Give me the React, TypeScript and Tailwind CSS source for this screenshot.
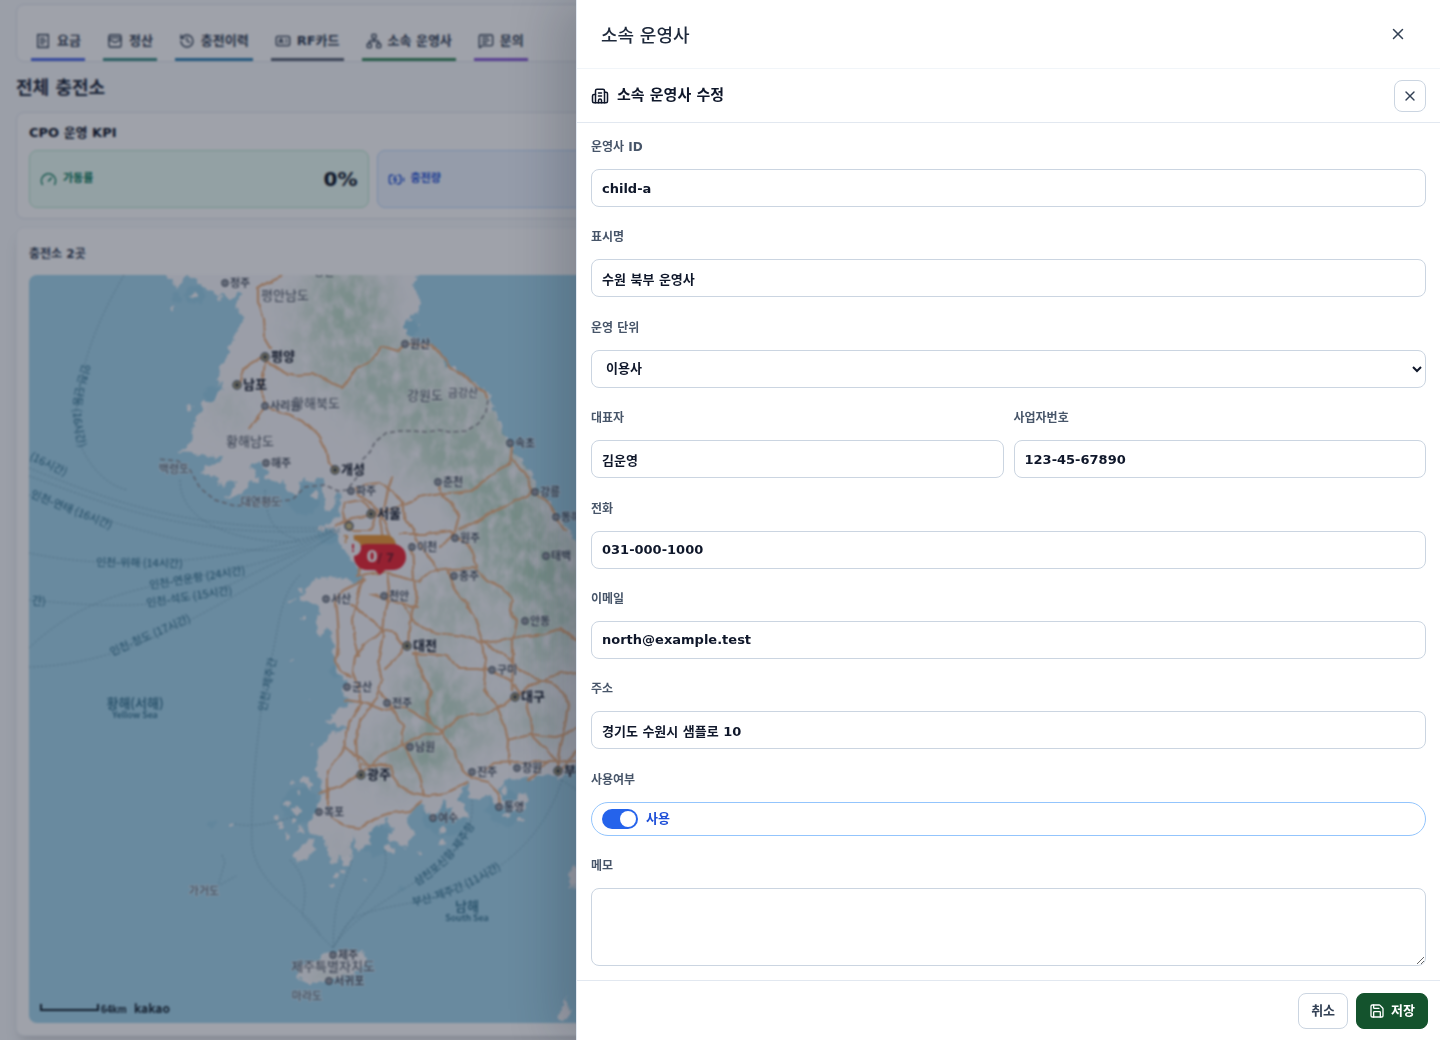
import React from "react";
import {
  BatteryCharging,
  Building2,
  Gauge,
  History,
  IdCard,
  MessageSquareText,
  Network,
  ReceiptText,
  Save,
  WalletCards,
  X,
  type LucideIcon,
} from "lucide-react";

const tabs: { label: string; icon: LucideIcon; line: string }[] = [
  { label: "요금", icon: ReceiptText, line: "border-[#4f6be8]" },
  { label: "정산", icon: WalletCards, line: "border-[#3f8f86]" },
  { label: "충전이력", icon: History, line: "border-[#3585b5]" },
  { label: "RF카드", icon: IdCard, line: "border-[#5b6475]" },
  { label: "소속 운영사", icon: Network, line: "border-[#3a8a5c]" },
  { label: "문의", icon: MessageSquareText, line: "border-[#8b5cd6]" },
];

const roads = [
  "M283 275L270 281L258 289L258 303L263 320L264 336L271 348",
  "M263 356L252 362L244 370L240 384",
  "M265 362L275 366L285 373L297 375L312 374L328 382L343 387L350 378L357 368L372 360L382 346L398 351L405 344L430 346L440 352L450 368L465 376L475 386L486 392L488 398",
  "M265 362L262 384L264 405L256 418L249 428",
  "M265 405L276 411L290 415L305 422L320 436L327 450L329 462L335 470",
  "M354 487L357 494L372 504L384 520L392 540L390 560",
  "M345 503L360 500L375 512L370 530L350 530L343 515L345 503",
  "M337 527L352 518L375 515L395 508L408 503L420 497L440 493L455 493L470 491L485 480L495 472L510 465L512 447",
  "M362 485L378 483L392 489L402 502L402 512L412 528L418 542L432 560L438 572",
  "M392 477L388 488L385 505L380 520L383 540",
  "M440 486L442 494L452 504L459 517L455 532L438 548",
  "M512 460L524 472L531 490L545 500L556 515L566 530",
  "M460 530L475 523L495 510L515 500L527 498L532 490",
  "M400 534L425 534L450 531L463 540L474 553L478 568",
  "M360 567L357 578L365 575L385 572L402 576L418 581L430 572L452 569L475 568L487 580L503 588L512 600L510 612L517 620L513 640L513 665L512 690",
  "M412 545L413 565L415 590L418 597L412 610L410 630L409 648",
  "M388 573L390 590L385 610L383 635L378 662L382 680L376 697L360 722L356 740L357 760L361 775",
  "M365 580L345 590L335 602L337 620L338 645L336 660L340 670L352 678",
  "M350 604L365 615L375 622L383 630L395 633L404 645L400 654L385 668",
  "M363 579L358 600L353 620L355 640L359 655",
  "M403 605L415 623L432 632L462 636L480 643L500 641L525 636L545 634L560 628L577 640",
  "M408 606L418 606L405 605L388 600L371 594",
  "M383 630L365 645L355 657L353 672L360 690L362 705L348 725L343 748L328 770L328 805",
  "M415 650L418 665L425 680L432 690L428 705L426 715L442 732L455 752L463 770L472 778L488 782L498 792L500 805",
  "M412 653L430 654L446 656L460 668L478 668L492 670L510 679L520 692",
  "M448 570L455 590L465 600L475 620L482 640L484 660L486 675L484 690L495 705L503 720L508 740L507 760L508 765",
  "M484 642L498 652L512 660L520 672L537 678L550 682L565 695L568 705L565 725L560 745L557 768",
  "M515 696L540 680L560 674L577 672",
  "M526 702L530 720L532 735L545 748L558 765",
  "M508 740L530 734L555 737L577 730",
  "M485 772L495 763L515 762L535 762L555 762L577 760",
  "M515 697L505 706L483 714L458 716L450 725L440 734L425 734L405 744L385 752L371 765L360 775L340 786L320 792",
  "M345 700L362 702L382 710L405 708L430 722",
  "M380 690L390 705L402 725L402 745L412 760L420 780L423 795",
  "M361 765L375 764L392 767L398 785L405 790L428 795L445 793L468 782",
  "M330 817L345 825L360 827L375 818L390 813L410 811L422 802",
  "M345 748L357 756L370 765L385 765",
  "M558 775L565 765L577 750M548 762L540 770L530 780",
];

const ferryRoutes = [
  "M124 275C95 325 80 365 75 420C76 450 100 485 128 490",
  "M29 468C120 505 190 530 335 528",
  "M29 476C110 505 190 540 335 530",
  "M29 495C90 515 160 540 230 548S300 542 340 528",
  "M29 553C100 568 200 570 335 530",
  "M29 648C90 590 150 588 230 570S300 545 340 530",
  "M29 600C90 605 170 615 240 580S290 560 340 532",
  "M29 667C120 665 190 620 245 590S300 558 340 530",
  "M180 480C180 520 230 543 300 542L340 530",
  "M265 490C265 525 280 535 300 540",
  "M300 575C275 600 280 640 265 680C260 720 250 790 252 845C258 890 310 910 320 935L333 948",
  "M290 860C310 880 305 900 302 915L320 935",
  "M352 860C340 900 335 890 333 948",
  "M385 850C390 885 370 885 333 948",
  "M472 800C475 840 450 860 415 882S350 920 333 948",
  "M562 780C540 850 480 890 410 903S350 920 333 948",
  "M562 780L577 790",
  "M235 824C255 828 275 822 300 815",
  "M222 855L225 862L218 886L236 876",
];

const cities: [number, number, string, boolean?][] = [
  [225, 283, "정주"],
  [265, 357, "평양", true],
  [237, 385, "남포", true],
  [265, 406, "사리원"],
  [405, 344, "원산"],
  [266, 463, "해주"],
  [335, 470, "개성", true],
  [351, 491, "파주"],
  [371, 514, "서울", true],
  [438, 482, "춘천"],
  [510, 443, "속초"],
  [535, 492, "강릉"],
  [556, 517, "동해"],
  [412, 547, "이천"],
  [455, 538, "원주"],
  [454, 576, "충주"],
  [546, 556, "태백"],
  [326, 599, "서산"],
  [384, 596, "천안"],
  [525, 621, "안동"],
  [407, 646, "대전", true],
  [492, 670, "구미"],
  [347, 687, "군산"],
  [387, 703, "전주"],
  [515, 697, "대구", true],
  [410, 747, "남원"],
  [361, 775, "광주", true],
  [472, 772, "진주"],
  [517, 768, "창원"],
  [558, 771, "부산", true],
  [319, 812, "목포"],
  [433, 818, "여수"],
  [499, 807, "통영"],
  [333, 955, "제주"],
  [329, 981, "서귀포"],
];

const regions: [number, number, string, number][] = [
  [285, 300, "평안남도", 13],
  [316, 408, "황해북도", 13],
  [250, 446, "황해남도", 13],
  [425, 400, "강원도", 13],
  [463, 397, "금강산", 11],
  [174, 473, "백령도", 11],
  [261, 506, "대연평도", 11],
  [204, 895, "가거도", 11],
  [333, 971, "제주특별자치도", 13],
  [307, 1000, "마라도", 11],
];

const seaLabels: [string, string][] = [
  ["M83 363C74 395 64 415 90 480", "인천-단둥 (16시간)"],
  ["M29 459L100 493", "(16시간)"],
  ["M30 497L140 541", "인천-연태 (16시간)"],
  ["M96 566L210 568", "인천-위해 (14시간)"],
  ["M150 589L270 570", "인천-연운항 (24시간)"],
  ["M147 607L265 589", "인천-석도 (15시간)"],
  ["M112 656L222 608", "인천-청도 (17시간)"],
  ["M266 712L280 640", "인천-제주간"],
  ["M417 886Q458 862 482 812", "삼천포신항-제주항"],
  ["M413 906Q465 896 520 856", "부산-제주간 (11시간)"],
];

const islets: [number, number, number][] = [
  [173, 308, 2], [195, 296, 3], [189, 407, 3], [220, 298, 2], [293, 782, 2],
  [288, 803, 3], [293, 810, 2], [277, 818, 2], [281, 825, 3], [295, 820, 3],
  [298, 792, 2], [288, 836, 2], [305, 780, 4], [310, 785, 3], [297, 811, 3],
  [300, 830, 3], [232, 826, 2], [335, 875, 3], [346, 860, 5], [343, 872, 2],
  [332, 885, 2], [364, 881, 2], [389, 850, 4], [400, 841, 3], [420, 852, 2],
  [442, 830, 4], [442, 842, 3], [450, 805, 5], [455, 815, 5], [462, 815, 4],
  [518, 807, 6], [524, 798, 5], [508, 816, 3], [520, 818, 3], [505, 790, 3],
  [353, 282, 1], [410, 321, 2], [419, 324, 1], [408, 317, 1], [347, 857, 3],
  [315, 495, 3], [322, 527, 4], [301, 590, 2], [292, 602, 2], [303, 617, 2],
  [345, 690, 3], [310, 700, 1], [293, 660, 1], [312, 745, 1], [327, 840, 3],
];

const hills: [number, number, number, number, number][] = [
  [355, 305, 35, 45, 0.5], [395, 385, 55, 45, 0.55], [330, 330, 40, 60, 0.35],
  [470, 440, 45, 50, 0.5], [500, 500, 45, 35, 0.6], [520, 550, 50, 45, 0.6],
  [430, 450, 40, 35, 0.35], [450, 610, 40, 35, 0.35], [550, 600, 40, 50, 0.55],
  [430, 700, 30, 40, 0.6], [430, 755, 20, 18, 0.9], [540, 720, 25, 25, 0.4],
  [540, 650, 40, 30, 0.3], [395, 760, 30, 30, 0.4], [230, 410, 14, 14, 0.4],
  [470, 720, 30, 35, 0.4], [330, 974, 20, 8, 0.6], [340, 850, 10, 10, 0.3],
];

function KoreaMap() {
  return (
    <svg
      viewBox="29 275 1382 748"
      preserveAspectRatio="xMinYMin slice"
      className="block h-full w-full"
      role="img"
      aria-label="충전소 지도"
    >
      <defs>
        <filter id="rough" x="-5%" y="-5%" width="110%" height="110%">
          <feTurbulence type="fractalNoise" baseFrequency="0.14" numOctaves="3" seed="4" />
          <feDisplacementMap in="SourceGraphic" scale="9" xChannelSelector="R" yChannelSelector="G" />
        </filter>
        <filter id="roadShape">
          <feTurbulence type="fractalNoise" baseFrequency="0.06" numOctaves="2" seed="2" />
          <feDisplacementMap in="SourceGraphic" scale="6" xChannelSelector="R" yChannelSelector="G" />
        </filter>
        <filter id="terrain" x="-20%" y="-20%" width="140%" height="140%">
          <feGaussianBlur in="SourceGraphic" stdDeviation="14" result="soft" />
          <feTurbulence type="fractalNoise" baseFrequency="0.09 0.06" numOctaves="4" seed="8" />
          <feColorMatrix values="0 0 0 0 0  0 0 0 0 0  0 0 0 0 0  2 0 0 0 -0.3" result="noise" />
          <feComposite in="soft" in2="noise" operator="in" />
        </filter>
        <clipPath id="landClip">
          <use href="#mainland" />
          <use href="#jeju" />
        </clipPath>
        <path
          id="mainland"
          d="M167 275L177 287L182 283L185 275L197 280L202 288L212 290L217 296L223 295L230 300L238 294L243 294L235 307L240 315L245 316L242 323L237 332L232 340L227 355L220 367L217 380L218 385L223 383L218 397L213 402L205 403L197 417L192 430L193 438L187 447L177 452L193 453L208 457L223 456L220 463L205 467L203 473L217 478L223 487L230 481L236 484L227 499L241 495L246 488L250 480L257 482L257 474L251 466L258 462L268 470L264 478L277 484L283 480L288 490L296 496L303 478L312 482L323 477L322 492L325 506L333 508L337 493L342 495L337 510L339 517L330 522L320 525L337 533L342 547L350 557L357 567L362 578L359 586L350 580L333 577L317 578L310 587L298 598L307 603L316 603L320 615L315 617L320 637L327 627L332 640L335 660L338 673L348 682L342 692L353 703L340 708L327 722L348 728L330 733L320 750L315 767L320 777L322 790L320 803L315 812L308 822L310 833L323 837L328 853L333 865L340 857L351 856L353 832L357 850L370 843L370 832L387 820L393 828L387 840L400 842L406 848L416 834L408 826L407 815L415 807L423 802L430 818L440 812L443 800L452 806L458 820L467 818L465 806L457 800L468 780L469 797L480 800L490 795L500 808L507 805L498 790L507 780L530 778L547 773L560 778L577 767L620 740L640 640L590 560L577 543L567 527L560 518L553 507L537 487L527 467L510 447L498 420L488 393L473 382L450 367L433 345L413 340L405 332L405 318L417 313L420 295L413 285L418 275L418 265L167 265Z"
        />
        <path id="jeju" d="M297 973L306 963L325 955L348 951L362 951L368 960L360 969L348 976L331 980L310 983L301 981Z" />
      </defs>
      <rect x="29" y="275" width="1382" height="748" fill="#a5d7ed" />
      <g filter="url(#rough)">
        <g fill="#86c6e0" opacity="0.35">
          <circle cx="195" cy="295" r="9" />
          <circle cx="177" cy="298" r="5" />
          <circle cx="410" cy="328" r="9" />
          <circle cx="212" cy="394" r="8" />
          <circle cx="305" cy="500" r="15" />
          <circle cx="328" cy="535" r="10" />
          <circle cx="300" cy="805" r="18" />
          <circle cx="335" cy="672" r="6" />
          <circle cx="375" cy="840" r="16" />
          <circle cx="505" cy="808" r="18" />
          <circle cx="445" cy="815" r="22" />
          <circle cx="402" cy="888" r="3" />
          <circle cx="212" cy="824" r="3" />
        </g>
        <use href="#mainland" fill="#f9f9fc" />
        <use href="#jeju" fill="#f9f9fc" />
        <g fill="#f9f9fc">
          <path d="M293 855L303 844L313 840L317 850L307 858L297 861Z" />
          <path d="M322 492L331 494L332 509L325 510Z" />
          <path d="M571 868L590 866L590 888L569 886Z" />
          <path d="M566 995L568 1008L572 1010L564 1021L559 1017Z" />
          {islets.map(([x, y, r]) => (
            <circle key={`${x}-${y}`} cx={x} cy={y} r={r} />
          ))}
        </g>
      </g>
      <g clipPath="url(#landClip)">
        <g filter="url(#terrain)" fill="#a3cdb0">
          {hills.map(([x, y, rx, ry, o]) => (
            <ellipse key={`${x}-${y}`} cx={x} cy={y} rx={rx} ry={ry} opacity={o} />
          ))}
        </g>
      </g>
      <g fill="none" stroke="#719fb4" strokeDasharray="2 2" opacity="0.8">
        {ferryRoutes.map((d) => (
          <path key={d} d={d} />
        ))}
      </g>
      <path
        d="M488 400L486 412L478 424L466 431L450 432L438 430L428 432L412 431L400 431L386 433L375 442L370 452L362 460L361 472L347 490L338 491L325 485L305 487L292 500M290 500L255 504L235 506L215 500L200 488L190 470L178 461L158 459"
        fill="none"
        stroke="#8a8a90"
        strokeWidth="1.5"
        strokeDasharray="5 3"
      />
      <g fill="none" stroke="#eeb280" strokeWidth="2.2" strokeLinejoin="round" strokeLinecap="round" filter="url(#roadShape)">
        {roads.map((d) => (
          <path key={d} d={d} />
        ))}
      </g>
      <g className="font-['Noto_Sans_CJK_KR',sans-serif]" fill="#4b5563" textAnchor="middle">
        {regions.map(([x, y, label, size]) => (
          <text key={label} x={x} y={y} fontSize={size} stroke="#f9f9fc" strokeWidth="2" strokeOpacity="0.5" paintOrder="stroke">
            {label}
          </text>
        ))}
      </g>
      <g className="font-['Noto_Sans_CJK_KR',sans-serif]">
        {cities.map(([x, y, label, major]) => (
          <g key={label}>
            <circle cx={x} cy={y} r={major ? 4 : 3} fill={major ? "#cdbb82" : "#d8dadf"} stroke="#4b5563" strokeWidth="1.3" />
            <circle cx={x} cy={y} r={major ? 2 : 1} fill="#374151" />
            <text
              x={x + (major ? 6 : 5)}
              y={y + 4}
              fontSize={major ? 13 : 11}
              fontWeight={major ? 700 : 500}
              fill={major ? "#111827" : "#374151"}
              stroke="#f9f9fc"
              strokeWidth="2"
              strokeOpacity="0.5"
              paintOrder="stroke"
            >
              {label}
            </text>
          </g>
        ))}
        <text x="324" y="276" fontSize="11" fill="#374151" textAnchor="middle">
          장진
        </text>
      </g>
      <g className="font-['Noto_Sans_CJK_KR',sans-serif]" fill="#2f6f8c" fontSize="11">
        {seaLabels.map(([d, label], i) => (
          <React.Fragment key={label}>
            <path id={`sea-${i}`} d={d} fill="none" />
            <text>
              <textPath href={`#sea-${i}`}>{label}</textPath>
            </text>
          </React.Fragment>
        ))}
        <text x="32" y="605">간)</text>
        <g textAnchor="middle" fontWeight="500">
          <text x="135" y="708" fontSize="13">황해(서해)</text>
          <text x="135" y="718" fontSize="9">Yellow Sea</text>
          <text x="467" y="911" fontSize="13">남해</text>
          <text x="467" y="921" fontSize="9">South Sea</text>
        </g>
      </g>
      <circle cx="349" cy="526" r="4" fill="#cdbb82" stroke="#4b5563" strokeWidth="1.3" />
      <rect x="346" y="535" width="50" height="20" rx="10" fill="#ee9a3a" />
      <circle cx="346" cy="539" r="8" fill="#f9f9fc" />
      <path d="M367 544h26a13 13 0 0 1 0 26h-8l-5 5l-5-5h-8a13 13 0 0 1 0-26Z" fill="#ef2836" />
      <circle cx="353" cy="548" r="8" fill="#f9f9fc" />
      <g className="font-['DejaVu_Sans',sans-serif] font-bold" textAnchor="middle">
        <text x="346" y="543" fontSize="10" fill="#f0a050">?</text>
        <text x="353" y="552" fontSize="11" fill="#ef2836">!</text>
        <text x="372" y="562" fontSize="16" fill="#ffffff">0</text>
        <text x="386" y="562" fontSize="12" fill="#7f1d2b">/ 7</text>
      </g>
      <path d="M41 1004v6h57v-6" fill="none" stroke="#17232f" strokeWidth="2" />
      <g fill="#17232f" className="font-bold">
        <text x="101" y="1013" fontSize="10" className="font-['Liberation_Sans',sans-serif]">64km</text>
        <text x="134" y="1013" fontSize="12" className="font-['Noto_Sans_CJK_KR',sans-serif]">kakao</text>
      </g>
    </svg>
  );
}

function Dashboard() {
  return (
    <main className="flex h-screen flex-col overflow-hidden bg-[#f8fafc] px-4 pt-1 pb-1 text-[#0f172a]">
      <nav className="flex h-[58px] shrink-0 items-end gap-[18px] rounded-lg border border-slate-200 bg-white px-3.5">
        {tabs.map(({ label, icon: Icon, line }) => (
          <a
            key={label}
            href="#"
            className={`flex h-[38px] shrink-0 items-center gap-1.5 border-b-[3px] px-1 text-[13px] font-bold text-[#334155] ${line}`}
          >
            <Icon size={16} />
            {label}
          </a>
        ))}
      </nav>
      <h1 className="flex h-[50px] shrink-0 items-center pt-0.5 text-lg font-semibold text-[#1e293b]">전체 충전소</h1>
      <section className="shrink-0 rounded-lg border border-slate-200 bg-white px-3 py-2.5">
        <h2 className="text-[13px] leading-5 font-bold">CPO 운영 KPI</h2>
        <div className="mt-[7px] grid grid-cols-4 gap-2">
          <div className="flex h-[58px] items-center gap-1.5 rounded-lg border border-[#bbead2] bg-[#ecfdf5] px-2.5 text-[11px] font-bold text-[#047857]">
            <Gauge size={17} />
            가동률
            <strong className="ml-auto text-xl font-bold text-[#0f172a]">0%</strong>
          </div>
          <div className="flex h-[58px] items-center gap-1.5 rounded-lg border border-[#bfdbfe] bg-[#eff6ff] px-2.5 text-[11px] font-bold text-[#1d4ed8]">
            <BatteryCharging size={17} />
            충전량
          </div>
        </div>
      </section>
      <section className="mt-2 flex min-h-0 flex-1 flex-col rounded-lg border border-slate-100 bg-white px-3 pb-3 shadow-lg">
        <h2 className="flex h-[47px] shrink-0 items-center pt-1 text-xs font-bold text-[#334155]">충전소 2곳</h2>
        <div className="min-h-0 flex-1 overflow-hidden rounded-lg">
          <KoreaMap />
        </div>
      </section>
    </main>
  );
}

const control =
  "h-[38px] w-full rounded-lg border border-[#cbd5e1] bg-white px-2.5 text-[13px] font-bold text-[#0f172a] outline-none";

function Field({ id, label, children }: { id: string; label: string; children: React.ReactNode }) {
  return (
    <div className="flex min-w-0 flex-1 flex-col gap-3">
      <label htmlFor={id} className="text-xs leading-5 font-bold text-[#475569]">
        {label}
      </label>
      {children}
    </div>
  );
}

function TextField({ id, label, value }: { id: string; label: string; value: string }) {
  return (
    <Field id={id} label={label}>
      <input id={id} type="text" defaultValue={value} className={control} />
    </Field>
  );
}

function OperatorDrawer() {
  return (
    <aside
      role="dialog"
      aria-label="소속 운영사"
      className="fixed inset-y-0 right-0 flex w-3/5 flex-col border-l border-[#e2e8f0] bg-white shadow-[-18px_0_48px_rgba(15,23,42,0.2)]"
    >
      <header className="flex h-[69px] shrink-0 items-center justify-between border-b border-[#f1f5f9] px-6">
        <h2 className="pt-1 text-lg font-medium text-[#1e293b]">소속 운영사</h2>
        <button type="button" aria-label="닫기" className="flex size-9 items-center justify-center text-[#334155]">
          <X size={18} />
        </button>
      </header>
      <div className="flex h-[54px] shrink-0 items-center gap-2 border-b border-[#e2e8f0] px-3.5">
        <Building2 size={18} className="text-[#0f172a]" />
        <h3 className="text-[15px] font-bold text-[#0f172a]">소속 운영사 수정</h3>
        <button
          type="button"
          aria-label="수정 닫기"
          className="ml-auto flex size-8 items-center justify-center rounded-lg border border-[#cbd5e1] text-[#334155]"
        >
          <X size={16} />
        </button>
      </div>
      <form className="flex min-h-0 flex-1 flex-col" onSubmit={(e) => e.preventDefault()}>
        <div className="flex min-h-0 flex-1 flex-col justify-between overflow-y-auto p-3.5">
          <div className="flex">
            <TextField id="operator-id" label="운영사 ID" value="child-a" />
          </div>
          <div className="flex">
            <TextField id="display-name" label="표시명" value="수원 북부 운영사" />
          </div>
          <div className="flex">
            <Field id="unit" label="운영 단위">
              <select id="unit" className={control}>
                <option>이용사</option>
              </select>
            </Field>
          </div>
          <div className="flex gap-2.5">
            <TextField id="owner" label="대표자" value="김운영" />
            <TextField id="business-no" label="사업자번호" value="123-45-67890" />
          </div>
          <div className="flex">
            <TextField id="phone" label="전화" value="031-000-1000" />
          </div>
          <div className="flex">
            <TextField id="email" label="이메일" value="north@example.test" />
          </div>
          <div className="flex">
            <TextField id="address" label="주소" value="경기도 수원시 샘플로 10" />
          </div>
          <div className="flex flex-col gap-3">
            <span className="text-xs leading-5 font-bold text-[#475569]">사용여부</span>
            <label className="relative flex h-[34px] items-center gap-2 rounded-full border border-[#93c5fd] px-2.5 text-[13px] font-bold text-[#1d4ed8]">
              <input type="checkbox" defaultChecked className="peer sr-only" />
              <span className="flex h-5 w-9 items-center rounded-full bg-[#cbd5e1] p-0.5 peer-checked:justify-end peer-checked:bg-[#2563eb]">
                <span className="size-4 rounded-full bg-white" />
              </span>
              사용
            </label>
          </div>
          <div className="flex">
            <Field id="memo" label="메모">
              <textarea
                id="memo"
                className="block h-[78px] w-full resize-y rounded-lg border border-[#cbd5e1] bg-white px-2.5 py-2 text-[13px] font-bold text-[#0f172a] outline-none"
              />
            </Field>
          </div>
        </div>
        <footer className="flex h-[60px] shrink-0 items-center justify-end gap-2 border-t border-[#e2e8f0] px-3">
          <button type="button" className="h-9 rounded-lg border border-[#cbd5e1] px-3 text-[13px] font-bold text-[#334155]">
            취소
          </button>
          <button
            type="submit"
            className="flex h-9 items-center gap-1.5 rounded-lg border border-[#14532d] bg-[#14532d] px-3 text-[13px] font-bold text-white"
          >
            <Save size={16} />
            저장
          </button>
        </footer>
      </form>
    </aside>
  );
}

export default function App() {
  return (
    <div className="font-['DejaVu_Sans','Noto_Sans_CJK_KR',sans-serif]">
      <Dashboard />
      <div className="fixed inset-0 bg-[#0f172a]/40 backdrop-blur-[1px]" />
      <OperatorDrawer />
    </div>
  );
}
